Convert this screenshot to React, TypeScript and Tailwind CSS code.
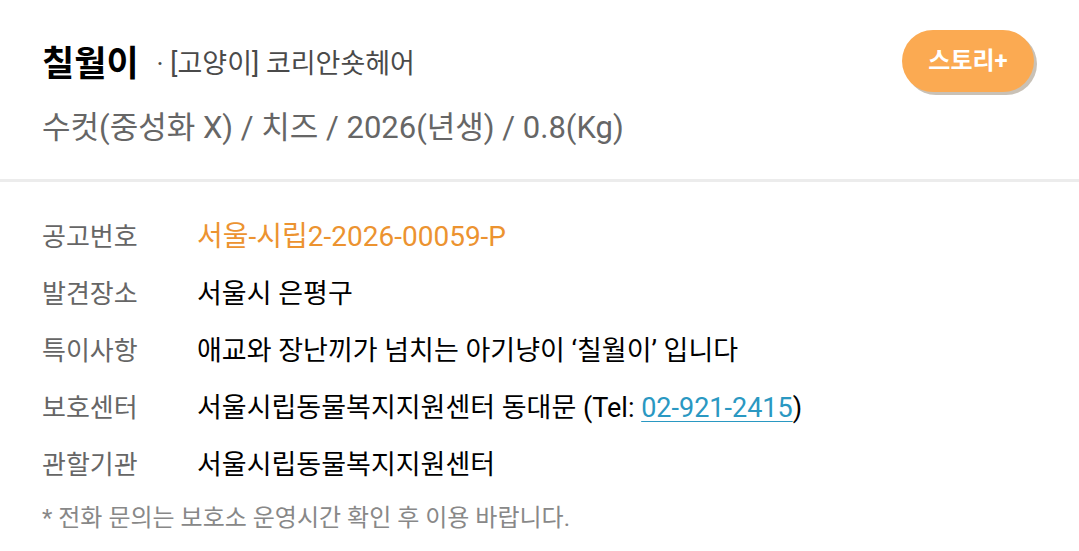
const rows: { label: string; value: React.ReactNode; accent?: boolean }[] = [
  { label: "공고번호", value: "서울-시립2-2026-00059-P", accent: true },
  { label: "발견장소", value: "서울시 은평구" },
  { label: "특이사항", value: "애교와 장난끼가 넘치는 아기냥이 ‘칠월이’ 입니다" },
  {
    label: "보호센터",
    value: (
      <>
        서울시립동물복지지원센터 동대문 (Tel:{" "}
        <a href="#" className="text-[#2a98c2] underline underline-offset-4 decoration-1">
          02-921-2415
        </a>
        )
      </>
    ),
  },
  { label: "관할기관", value: "서울시립동물복지지원센터" },
];

export default function App() {
  return (
    <div
      className="w-[1079px] h-[551px] bg-white overflow-hidden"
      style={{ fontFamily: "Roboto, 'Noto Sans CJK KR', sans-serif" }}
    >
      {/* ── Header: name, breed, summary ── */}
      <div className="flex items-start justify-between pl-[42px] pr-[42px] pt-[40px] h-[179px]">
        <div className="flex flex-col">
          <div className="flex items-center h-[48px]">
            <span className="text-[35px] font-bold text-black leading-none">칠월이</span>
            <span className="ml-[18px] text-[27px] text-[#4a4a4a] leading-none">· [고양이] 코리안숏헤어</span>
          </div>
          <div className="mt-[24px] text-[31px] text-[#666] leading-none">
            수컷(중성화 X) / 치즈 / 2026(년생) / 0.8(Kg)
          </div>
        </div>
        <button className="mt-[-10px] mr-[3px] w-[132px] h-[62px] rounded-full bg-[#fbaa52] text-white text-[24px] font-bold shadow-[3px_3px_0_#c9c1b6]">
          스토리+
        </button>
      </div>

      <div className="h-[3px] bg-[#ececec]" />

      {/* ── Detail rows ── */}
      <div className="pl-[42px] pt-[41px] flex flex-col gap-[29px]">
        {rows.map((r) => (
          <div key={r.label} className="flex items-center leading-[28px]">
            <span className="w-[155px] text-[26px] text-[#666]">{r.label}</span>
            <span className={r.accent ? "text-[28px] text-[#ec9330]" : "text-[27px] text-black"}>{r.value}</span>
          </div>
        ))}
        <p className="mt-[-3px] text-[24px] text-[#888] leading-[26px]">
          * 전화 문의는 보호소 운영시간 확인 후 이용 바랍니다.
        </p>
      </div>
    </div>
  );
}
